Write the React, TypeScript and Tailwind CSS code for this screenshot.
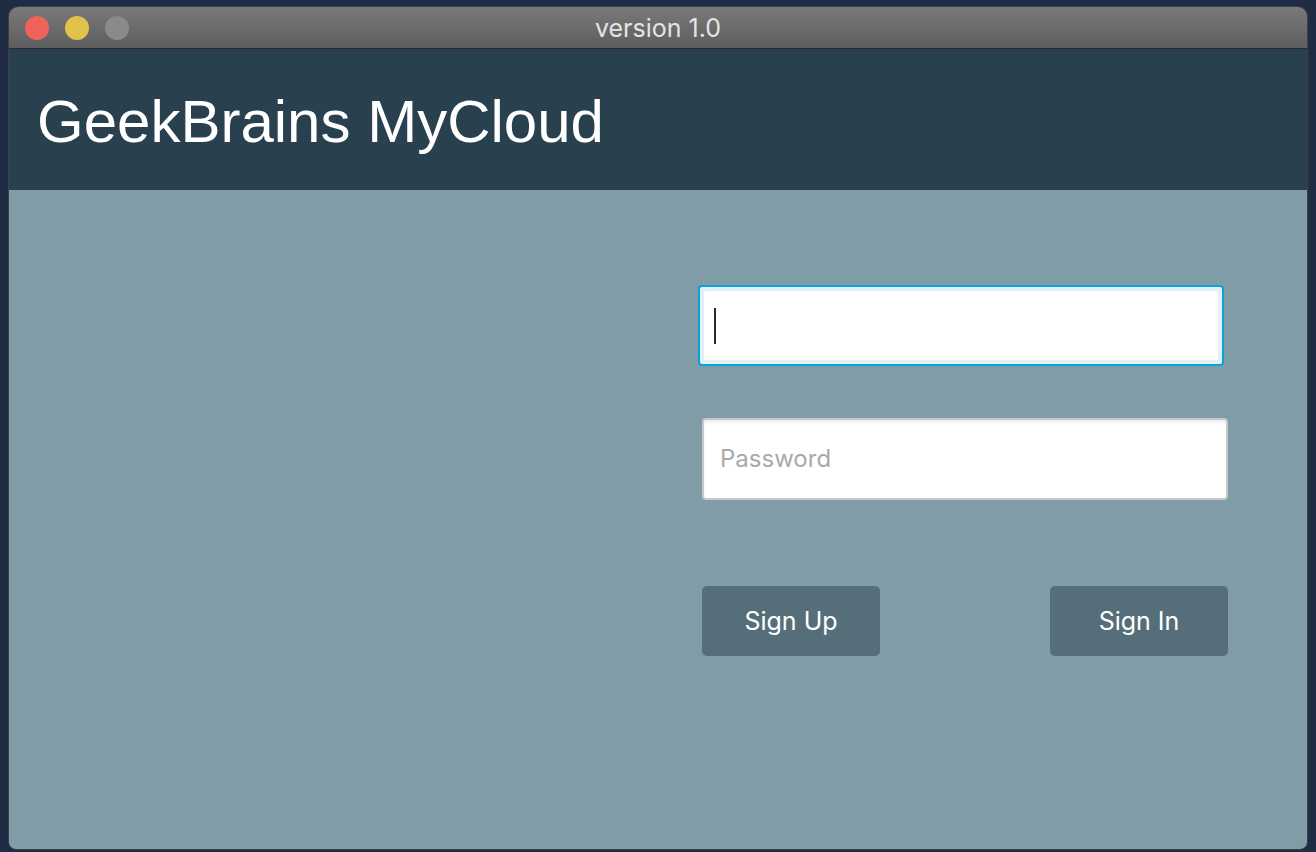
const App = () => {
    return (
        <div className="w-[1316px] h-[852px] bg-[#1f2c43] pt-[6px] pl-[8px] overflow-hidden">
            <div className="w-[1300px] h-[844px] flex flex-col rounded-t-[10px] rounded-b-[8px] overflow-hidden border border-[#3a3f48]">
                {/* title bar */}
                <div className="relative h-[42px] shrink-0 flex items-center bg-gradient-to-b from-[#7a7a7a] to-[#5d5d5d] border-b border-[#2a2a2a]">
                    <div className="flex items-center gap-[16px] pl-[16px]">
                        <span className="w-[24px] h-[24px] rounded-full bg-[#ee645a]" />
                        <span className="w-[24px] h-[24px] rounded-full bg-[#e1c24b]" />
                        <span className="w-[24px] h-[24px] rounded-full bg-[#8a8a8a]" />
                    </div>
                    <div
                        className="absolute inset-0 flex items-center justify-center pt-[2px] text-[25px] text-[#e4e4e4]"
                        style={{ fontFamily: 'Inter, "Noto Sans", sans-serif' }}
                    >
                        version 1.0
                    </div>
                </div>

                {/* header */}
                <div className="h-[141px] shrink-0 bg-[#29414f] flex items-center pl-[28px] pt-[4px]">
                    <h1
                        className="text-[60px] leading-none text-white"
                        style={{ fontFamily: '"Liberation Sans", Arial, sans-serif' }}
                    >
                        GeekBrains MyCloud
                    </h1>
                </div>

                {/* body */}
                <div
                    className="flex-1 bg-[#7f9ca7] pt-[95px] pl-[689px]"
                    style={{ fontFamily: 'Inter, "Noto Sans", sans-serif' }}
                >
                    <div className="w-[531px] flex flex-col">
                        <div className="w-[526px] h-[81px] rounded-[4px] border-2 border-[#0ba2d8] bg-[#e0f1f8] p-[4px]">
                            <div className="h-full bg-white rounded-[2px] flex items-center pl-[10px]">
                                <span className="w-[2px] h-[36px] bg-[#2a2a2a]" />
                            </div>
                        </div>
                        <div className="ml-[4px] mt-[52px] w-[526px] h-[82px] rounded-[4px] border-2 border-[#c6c9cb] bg-white flex items-center pl-[16px] shadow-[inset_0_2px_3px_rgba(0,0,0,0.08)]">
                            <span className="text-[24px] text-[#a9a9a9]">Password</span>
                        </div>
                        <div className="ml-[4px] mt-[86px] w-[526px] flex justify-between">
                            <button className="w-[178px] h-[70px] pt-[2px] rounded-[5px] bg-[#566e7a] text-white text-[25px]">
                                Sign Up
                            </button>
                            <button className="w-[178px] h-[70px] pt-[2px] rounded-[5px] bg-[#566e7a] text-white text-[25px]">
                                Sign In
                            </button>
                        </div>
                    </div>
                </div>
            </div>
        </div>
    );
};

export default App;
